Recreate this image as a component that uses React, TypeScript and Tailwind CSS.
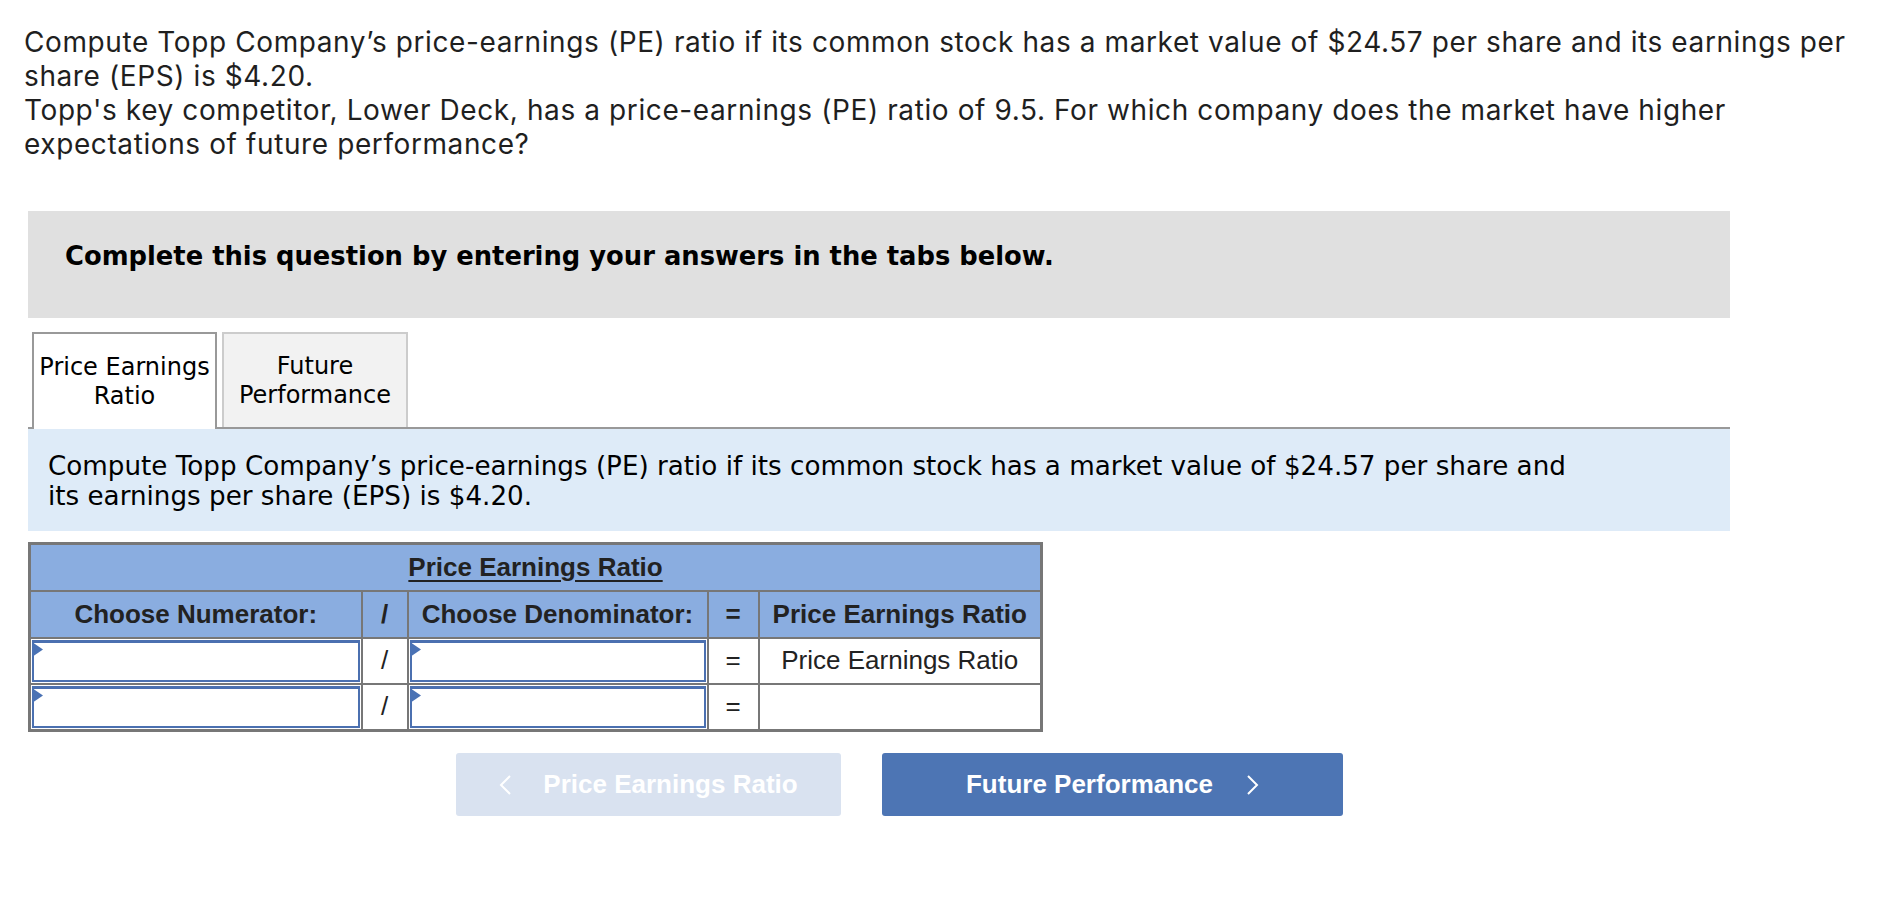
import React from "react";

function Triangle() {
  return (
    <svg
      className="absolute left-[-2px] top-[-1px]"
      width="11"
      height="15"
      viewBox="0 0 11 15"
    >
      <path d="M0 0 L11 7.5 L0 15 Z" fill="#4a72b4" />
    </svg>
  );
}

function InputCell() {
  return (
    <td className="border-2 border-[#777] p-[1px] align-top">
      <div className="relative h-[42px] border-2 border-t-[3px] border-[#4b70b0] bg-white">
        <Triangle />
      </div>
    </td>
  );
}

function Chevron({ dir }: { dir: "left" | "right" }) {
  return (
    <svg width="13" height="22" viewBox="0 0 13 22" fill="none">
      <path
        d={dir === "left" ? "M11 2 L2 11 L11 20" : "M2 2 L11 11 L2 20"}
        stroke="white"
        strokeWidth="2"
      />
    </svg>
  );
}

export default function App() {
  return (
    <div className="min-h-screen bg-white text-[#222]">
      {/* Question */}
      <div className="pl-[24px] pt-[25px] font-['Inter',sans-serif] text-[28px] leading-[34px] tracking-[0.6px] whitespace-nowrap text-[#1f1f1f]">
        Compute Topp Company’s price-earnings (PE) ratio if its common stock has a market value of $24.57 per share and its earnings per
        <br />
        share (EPS) is $4.20.
        <br />
        Topp's key competitor, Lower Deck, has a price-earnings (PE) ratio of 9.5. For which company does the market have higher
        <br />
        expectations of future performance?
      </div>

      <div className="ml-[28px] mt-[50px] w-[1702px]">
        {/* Instructions */}
        <div className="h-[107px] bg-[#e0e0e0] pl-[37px] pt-[30px] font-['DejaVu_Sans',Verdana,sans-serif] text-[25.8px] font-bold leading-[30px] text-black">
          Complete this question by entering your answers in the tabs below.
        </div>

        {/* Tabs */}
        <div className="mt-[14px] flex items-end gap-[5px] border-b-2 border-[#999] pl-[4px] font-['DejaVu_Sans',Verdana,sans-serif] text-[24px] leading-[29px] text-black">
          <div className="-mb-[2px] flex h-[97px] w-[185px] items-center justify-center border-2 border-b-0 border-[#999] bg-white text-center">
            Price Earnings
            <br />
            Ratio
          </div>
          <div className="flex h-[95px] w-[186px] items-center justify-center border-2 border-b-0 border-[#ccc] bg-[#f2f2f2] text-center">
            Future
            <br />
            Performance
          </div>
        </div>

        {/* Prompt */}
        <div className="h-[102px] bg-[#deebf8] pl-[20px] pt-[22px] font-['DejaVu_Sans',Verdana,sans-serif] text-[26.2px] leading-[30px] whitespace-nowrap text-black">
          Compute Topp Company’s price-earnings (PE) ratio if its common stock has a market value of $24.57 per share and
          <br />
          its earnings per share (EPS) is $4.20.
        </div>

        {/* Table */}
        <table className="mt-[11px] w-[1012px] table-fixed border-collapse border-[3px] border-[#777] font-['Liberation_Sans',Arial,sans-serif] text-[26px] text-[#222]">
          <colgroup>
            <col className="w-[332px]" />
            <col className="w-[46px]" />
            <col className="w-[300px]" />
            <col className="w-[51px]" />
            <col className="w-[283px]" />
          </colgroup>
          <tbody>
            <tr className="h-[47px] bg-[#8aade0]">
              <td colSpan={5} className="border-2 border-[#777] text-center font-bold underline underline-offset-[4px]">
                Price Earnings Ratio
              </td>
            </tr>
            <tr className="h-[47px] bg-[#8aade0] font-bold">
              <td className="border-2 border-[#777] text-center">Choose Numerator:</td>
              <td className="border-2 border-[#777] text-center">/</td>
              <td className="border-2 border-[#777] text-center">Choose Denominator:</td>
              <td className="border-2 border-[#777] text-center">=</td>
              <td className="border-2 border-[#777] text-center">Price Earnings Ratio</td>
            </tr>
            <tr className="h-[46px] bg-white">
              <InputCell />
              <td className="border-2 border-[#777] text-center">/</td>
              <InputCell />
              <td className="border-2 border-[#777] text-center">=</td>
              <td className="border-2 border-[#777] text-center">Price Earnings Ratio</td>
            </tr>
            <tr className="h-[47px] bg-white">
              <InputCell />
              <td className="border-2 border-[#777] text-center">/</td>
              <InputCell />
              <td className="border-2 border-[#777] text-center">=</td>
              <td className="border-2 border-[#777] text-center"></td>
            </tr>
          </tbody>
        </table>

        {/* Navigation */}
        <div className="mt-[21px] flex gap-[41px] pl-[428px] font-['Liberation_Sans',Arial,sans-serif] text-[26px] font-bold text-white">
          <button className="flex h-[63px] w-[385px] items-center justify-center gap-[31px] rounded-[3px] bg-[#d9e2f0]">
            <Chevron dir="left" />
            <span>Price Earnings Ratio</span>
          </button>
          <button className="flex h-[63px] w-[461px] items-center justify-center gap-[33px] rounded-[3px] bg-[#4d75b4]">
            <span>Future Performance</span>
            <Chevron dir="right" />
          </button>
        </div>
      </div>
    </div>
  );
}
